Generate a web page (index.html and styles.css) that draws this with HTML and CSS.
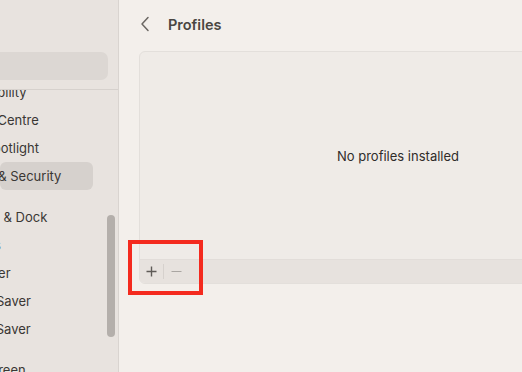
FILE: index.html
```html
<!DOCTYPE html>
<html lang="en">
<head>
  <meta charset="UTF-8" />
  <meta name="viewport" content="width=device-width, initial-scale=1.0"/>
  <link rel="stylesheet" href="styles.css">
  <title>Profiles</title>
</head>
<body>
  <div class="window">
    <aside class="sidebar">
      <div class="search"></div>
      <div class="sidebar-divider"></div>
      <div class="sidebar-scroll">
        <ul class="nav-group first">
          <li>Accessibility</li>
          <li>Control Centre</li>
          <li>Siri &amp; Spotlight</li>
          <li class="selected">Privacy &amp; Security</li>
        </ul>
        <ul class="nav-group">
          <li>Desktop &amp; Dock</li>
          <li>Displays</li>
          <li>Wallpaper</li>
          <li>Screen Saver</li>
          <li>Energy Saver</li>
        </ul>
        <ul class="nav-group">
          <li>Lock Screen</li>
        </ul>
      </div>
      <div class="scrollbar"></div>
    </aside>

    <main class="main">
      <header class="header">
        <button class="back" aria-label="Back">
          <svg width="10" height="16" viewBox="0 0 10 16">
            <path d="M8 1.5 L2 8 L8 14.5" fill="none" stroke="#6b6763" stroke-width="1.5" stroke-linecap="round" stroke-linejoin="round"/>
          </svg>
        </button>
        <h1>Profiles</h1>
      </header>

      <section class="panel">
        <div class="panel-body">No profiles installed</div>
        <div class="panel-footer">
          <button class="tool" aria-label="Add">
            <svg width="11" height="11" viewBox="0 0 11 11">
              <path d="M5.5 0.5 V10.5 M0.5 5.5 H10.5" stroke="#5f5b57" stroke-width="1.4"/>
            </svg>
          </button>
          <span class="tool-sep"></span>
          <button class="tool" aria-label="Remove" disabled>
            <svg width="11" height="11" viewBox="0 0 11 11">
              <path d="M0.5 5.5 H10.5" stroke="#aaa6a2" stroke-width="1.2"/>
            </svg>
          </button>
        </div>
      </section>

      <div class="highlight-box"></div>
    </main>
  </div>
</body>
</html>
```

FILE: styles.css
```css
body {
  margin: 0;
  font-family: Inter, "Noto Sans", sans-serif;
  background-color: #f3efeb;
  color: #3a3734;
}

.window {
  display: flex;
  height: 372px;
  overflow: hidden;
}

.sidebar {
  position: relative;
  width: 118px;
  flex-shrink: 0;
  background-color: #e8e3df;
  border-right: 1px solid #d9d4d0;
  padding-top: 52px;
  overflow: hidden;
}

.search {
  height: 28px;
  width: 120px;
  margin-left: -12px;
  border-radius: 7px;
  background-color: #dcd7d3;
}

.sidebar-divider {
  height: 1px;
  margin-top: 9px;
  background-color: #d6d1cd;
}

.sidebar-scroll {
  height: 282px;
  overflow: hidden;
}

ul {
  list-style-type: none;
  margin: 0;
  padding: 0;
}

.nav-group {
  margin-top: 13px;
}

.nav-group.first {
  margin-top: -12px;
}

.nav-group li {
  height: 28px;
  line-height: 28px;
  font-size: 13px;
  white-space: nowrap;
  text-indent: -51px;
  width: 93px;
  border-radius: 6px;
}

.nav-group li.selected {
  background-color: #d6d1cd;
}

.scrollbar {
  position: absolute;
  left: 107px;
  top: 215px;
  width: 8px;
  height: 122px;
  border-radius: 4px;
  background-color: #b4afab;
}

.main {
  position: relative;
  flex: 1;
  overflow: hidden;
}

.header {
  display: flex;
  align-items: center;
  height: 48px;
  padding-left: 21px;
}

.back {
  display: flex;
  align-items: center;
  padding: 0;
  border: none;
  background: none;
  margin-right: 18px;
}

h1 {
  margin: 0;
  font-size: 14.5px;
  font-weight: 600;
  color: #4a4642;
}

.panel {
  margin: 3px 0 0 20px;
  width: 516px;
  border: 1px solid #e3dfdb;
  border-radius: 6px;
  background-color: #efebe7;
  overflow: hidden;
}

.panel-body {
  height: 207px;
  display: flex;
  align-items: center;
  justify-content: center;
  font-size: 13px;
  color: #2f2c2a;
}

.panel-footer {
  display: flex;
  align-items: center;
  height: 23px;
  border-top: 1px solid #e2ddd9;
  background-color: #e7e2de;
  padding-left: 5px;
}

.tool {
  display: flex;
  align-items: center;
  justify-content: center;
  width: 13px;
  height: 20px;
  padding: 0;
  border: none;
  background: none;
}

.tool-sep {
  width: 1px;
  height: 15px;
  margin: 0 6px 0 5px;
  background-color: #d6d1cd;
}

.highlight-box {
  position: absolute;
  left: 9px;
  top: 240px;
  width: 67px;
  height: 47px;
  border: 4px solid #f42a1e;
}
```
